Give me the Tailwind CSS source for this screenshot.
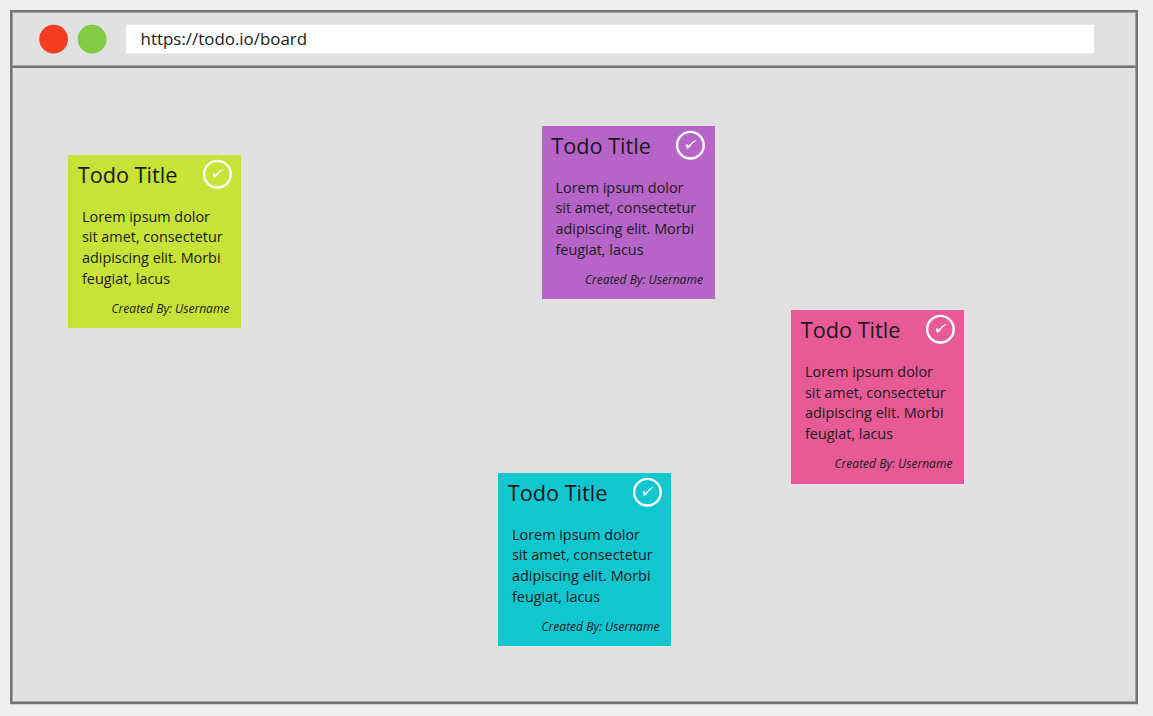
<!DOCTYPE html>
<html lang="en">
<head>
<meta charset="utf-8">
<title>Todo board</title>
<script src="https://cdn.jsdelivr.net/npm/@tailwindcss/browser@4"></script>
</head>
<body class="h-[716px] overflow-hidden bg-[#efefef] pt-[10px] pl-[10px] font-['Open_Sans',sans-serif] text-[#1a1a1a]">
<div class="flex h-[694px] w-[1128px] flex-col border-2 border-[#757575] bg-[#e1e1e1] shadow-[0_1px_0_#d6d6d6]">
  <header class="flex h-[56px] shrink-0 items-center border-b-2 border-[#757575] pl-[27px] shadow-[inset_1px_1px_0_#a3a3a3,inset_-1px_-1px_0_#a3a3a3]">
    <svg class="h-[30px] w-[68px] shrink-0" viewBox="0 0 68 30"><circle cx="14.6" cy="15.1" r="14.4" fill="#f23d22"/><circle cx="53.1" cy="15.1" r="14.4" fill="#83cb45"/></svg>
    <div class="ml-[19px] flex h-[28px] w-[968px] items-start bg-white pl-[14.6px] text-[16.9px] leading-[27px] whitespace-nowrap shadow-[0_1px_0_#f0f0f0,0_-1px_0_#eaeaea]">https://todo.io/board</div>
  </header>
  <main id="board" class="relative grow shadow-[inset_1px_0_0_#a3a3a3,inset_-1px_-1px_0_#a3a3a3]"></main>
</div>
<template id="note">
  <article class="absolute flex size-[173.4px] flex-col pt-[4px]">
    <div class="flex items-start justify-between pr-[9.5px] pl-[9.7px]">
      <h2 class="mt-[1px] text-[21.7px] leading-[30px] whitespace-nowrap">Todo Title</h2>
      <svg class="size-[30px] shrink-0" viewBox="0 0 30 30" fill="none"><g transform="translate(.4 .1)"><circle cx="15" cy="15.1" r="13.3" stroke="#fff" stroke-width="2.4"/><path d="M10.3 15.2Q11.5 13.8 12.3 14.4L13 16Q16 11.7 20.3 9.8L20.9 10.2Q16.8 13.1 13.4 18L11.5 18.4Q11.3 16.5 10.3 15.2Z" fill="#fff" stroke="#fff" stroke-width=".2"/></g></svg>
    </div>
    <p class="mt-[16.5px] pl-[14px] text-[14.4px] leading-[20.7px] whitespace-nowrap">Lorem ipsum dolor<br>sit amet, consectetur<br>adipiscing elit. Morbi<br>feugiat, lacus</p>
    <p class="mt-[11.6px] pr-[12px] text-right text-[12.04px] leading-[16px] whitespace-nowrap italic">Created By: Username</p>
  </article>
</template>
<script>
const notes = [
  { x: 56, y: 87, color: '#c7e337' },
  { x: 529.5, y: 58, color: '#b664c7' },
  { x: 779, y: 242.3, color: '#e75a97' },
  { x: 486, y: 405, color: '#10c6cf' }
];
const board = document.getElementById('board');
const template = document.getElementById('note');
for (const n of notes) {
  const el = template.content.firstElementChild.cloneNode(true);
  el.style.left = n.x + 'px';
  el.style.top = n.y + 'px';
  el.style.backgroundColor = n.color;
  board.append(el);
}
</script>
</body>
</html>
